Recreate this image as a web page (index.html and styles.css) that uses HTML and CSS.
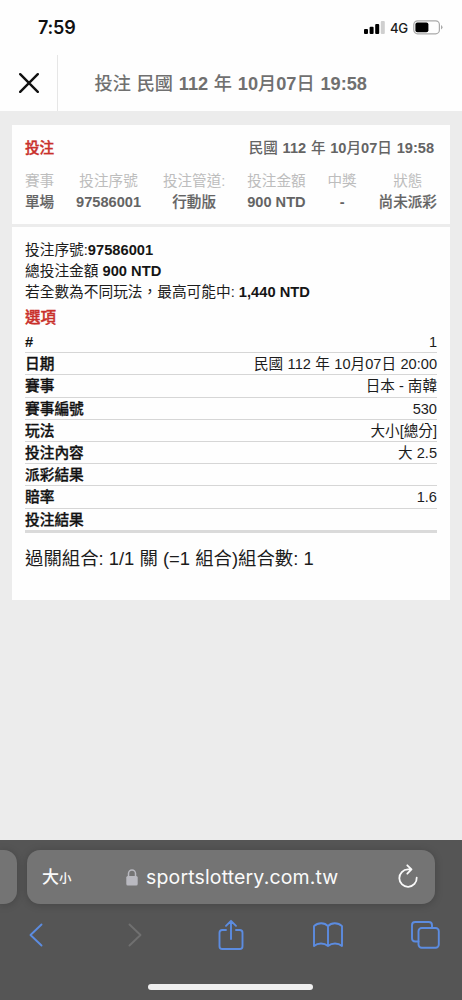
FILE: index.html
```html
<!DOCTYPE html>
<html lang="zh-Hant">
<head>
<meta charset="utf-8">
<meta name="viewport" content="width=device-width, initial-scale=1">
<title>投注</title>
<link rel="stylesheet" href="styles.css">
</head>
<body>
<div class="phone">
  <div class="status">
    <span class="clock">7:59</span>
    <div class="status-right">
      <svg class="signal" width="21" height="13" viewBox="0 0 21 13"><rect x="0" y="8" width="4" height="5" rx="1"/><rect x="5.6" y="5.8" width="4" height="7.2" rx="1"/><rect x="11.2" y="3" width="4" height="10" rx="1"/><rect x="16.8" y="0" width="4" height="13" rx="1" fill="#cfcfcf"/></svg>
      <span class="net">4G</span>
      <svg class="battery" width="30" height="15" viewBox="0 0 30 15"><rect x=".8" y=".8" width="25.6" height="13" rx="3.8" fill="none" stroke="#a9a9a9" stroke-width="1.2"/><rect x="2.4" y="2.4" width="13" height="9.8" rx="2"/><path d="M28 5v4.600q1.500-.8 1.500-2.300T28 5z" fill="#a9a9a9"/></svg>
    </div>
  </div>
  <header class="nav">
    <div class="close"><svg width="20" height="20" viewBox="0 0 20 20"><path d="M1.200 1.200l17.600 17.600M18.800 1.200L1.200 18.800"/></svg></div>
    <h1 class="title">投注 民國 <b>112</b> 年 <b>10</b>月<b>07</b>日 <b>19:58</b></h1>
  </header>
  <main class="content">
    <section class="card">
      <div class="summary">
        <div class="summary-head"><span class="red">投注</span><span class="when">民國 <b>112</b> 年 <b>10</b>月<b>07</b>日 <b>19:58</b></span></div>
        <div class="cols">
          <div><span>賽事</span><strong>單場</strong></div>
          <div><span>投注序號</span><strong class="latin">97586001</strong></div>
          <div><span>投注管道:</span><strong>行動版</strong></div>
          <div><span>投注金額</span><strong class="latin">900 NTD</strong></div>
          <div><span>中獎</span><strong class="latin">-</strong></div>
          <div><span>狀態</span><strong>尚未派彩</strong></div>
        </div>
      </div>
      <div class="detail">
        <p>投注序號:<b>97586001</b></p>
        <p>總投注金額 <b>900 NTD</b></p>
        <p>若全數為不同玩法，最高可能中: <b>1,440 NTD</b></p>
        <h2 class="red">選項</h2>
        <dl>
          <div><dt class="latin">#</dt><dd>1</dd></div>
          <div><dt>日期</dt><dd class="date">民國 112 年 10月07日 20:00</dd></div>
          <div><dt>賽事</dt><dd>日本 - 南韓</dd></div>
          <div><dt>賽事編號</dt><dd>530</dd></div>
          <div><dt>玩法</dt><dd>大小[總分]</dd></div>
          <div><dt>投注內容</dt><dd>大 2.5</dd></div>
          <div><dt>派彩結果</dt><dd></dd></div>
          <div><dt>賠率</dt><dd>1.6</dd></div>
          <div><dt>投注結果</dt><dd></dd></div>
        </dl>
        <p class="combo">過關組合: 1/1 關 (=1 組合)組合數: 1</p>
      </div>
    </section>
  </main>
  <footer class="browser">
    <div class="tabs">
      <div class="prev-tab"></div>
      <div class="address">
        <span class="size">大<small>小</small></span>
        <span class="host"><svg width="12" height="17" viewBox="0 0 12 17"><path d="M2.500 8V4.500a3.500 3.500 0 0 1 7 0V8" fill="none" stroke="#b9b9c0" stroke-width="1.500"/><rect x=".3" y="7" width="11.400" height="9.500" rx="1.600" fill="#b9b9c0"/></svg>sportslottery.com.tw</span>
        <svg class="reload" width="20" height="24" viewBox="0 0 20 24"><path d="M13.300 5.400H10A8.700 8.700 0 1 0 18.700 13.600M9.300 1.300l4.200 4.100-4.200 4.300"/></svg>
      </div>
    </div>
    <div class="tools">
      <svg width="14" height="24" viewBox="0 0 14 24"><path d="M12.500 1.500L1.500 12l11 10.500"/></svg>
      <svg class="off" width="14" height="24" viewBox="0 0 14 24"><path d="M1.500 1.500L12.500 12l-11 10.500"/></svg>
      <svg width="26" height="32" viewBox="0 0 26 32"><path d="M8 11H4.300Q1.500 11 1.500 13.800V27.200Q1.500 30 4.300 30H21.700Q24.500 30 24.500 27.200V13.800Q24.500 11 21.700 11H18M13 20V2M8 6.800l5-5 5 5"/></svg>
      <svg width="30" height="26" viewBox="0 0 30 26"><path d="M15 4.200Q12.500 1.200 8.200 1.200T1 4.200V24Q4 21.500 8 21.500T15 24Q18 21.500 22 21.500T29 24V4.200Q26 1.200 21.800 1.200T15 4.200V24"/></svg>
      <svg width="29" height="28" viewBox="0 0 29 28"><path d="M7.500 20.500H4.200Q1 20.500 1 17.300V4.200Q1 1 4.200 1H17.800Q21 1 21 4.200V7"/><rect x="7.500" y="7" width="20.300" height="19.800" rx="3.200"/></svg>
    </div>
    <div class="home"></div>
  </footer>
</div>
</body>
</html>
```
FILE: styles.css
```css
* { box-sizing: border-box; margin: 0; padding: 0; }
body { background: #ececec; }
.phone { width: 462px; height: 1000px; display: flex; flex-direction: column; overflow: hidden; font-family: "Liberation Sans", "Noto Sans CJK TC", sans-serif; color: #1c1c1c; }
svg { display: block; flex: none; }
.status { height: 55px; background: #fefefe; display: flex; justify-content: space-between; padding: 0 19px 0 38px; }
.clock { font: 600 18px/56px Inter, sans-serif; letter-spacing: -.2px; color: #111; }
.status-right { display: flex; align-items: center; height: 55px; }
.net { font: 500 13.2px/20px Inter, sans-serif; letter-spacing: -.2px; margin: 0 5px 0 5px; }
.nav { height: 56px; background: #fefefe; display: flex; }
.close { width: 58px; border-right: 1px solid #e6e6e6; display: flex; align-items: center; padding-left: 19px; }
.close path { stroke: #111; stroke-width: 2.4; stroke-linecap: round; }
.title { font-size: 18.2px; line-height: 58px; font-weight: 500; color: #707070; padding-left: 36.5px; white-space: nowrap; word-spacing: .7px; }
.content { height: 729px; background: #ececec; padding: 14px 12px 0; }
.card { height: 475px; background: #fefefe; font-size: 14.6px; }
.summary { height: 102px; border-bottom: 3px solid #ececec; padding: 12px 13px 0; }
.summary-head { display: flex; justify-content: space-between; line-height: 22px; color: #646464; padding-right: 3px; }
.when { font-weight: 500; word-spacing: .7px; }
.red { color: #c9302b; font-weight: 500; -webkit-text-stroke: .35px #c9302b; }
.cols { display: flex; justify-content: space-between; margin-top: 12px; text-align: center; color: #bdbdbd; }
.cols span, .cols strong { display: block; line-height: 21px; white-space: nowrap; }
.cols strong { color: #646464; font-weight: 500; -webkit-text-stroke: .2px #646464; }
.cols .latin, dl .latin { font-weight: 700; -webkit-text-stroke: 0; }
.detail { padding: 13px 13px 0; font-size: 14.7px; }
.detail p { line-height: 21px; height: 21px; white-space: nowrap; }
.detail b { color: #151515; }
.detail h2 { font-size: 15.5px; line-height: 29px; height: 28px; }
dl div { display: flex; justify-content: space-between; height: 22.2px; line-height: 23px; border-bottom: 1px solid #d6d6d6; }
dl div:last-child { height: 24px; border-bottom: 3px solid #dadada; }
dt { font-weight: 500; color: #111; -webkit-text-stroke: .3px #111; }
dd { font-size: 14.6px; }
.date { word-spacing: .4px; }
.detail .combo { font-size: 18.4px; line-height: 28px; height: 28px; margin-top: 12px; }
.browser { height: 160px; background: #555; padding-top: 10px; }
.tabs { display: flex; gap: 10px; }
.prev-tab { width: 17px; height: 54px; background: #747474; border-radius: 0 13px 13px 0; box-shadow: 0 1px 8px #0003; }
.address { width: 408px; height: 54px; background: #747474; border-radius: 13px; box-shadow: 0 1px 8px #0003; display: flex; align-items: center; justify-content: space-between; padding: 0 17px 0 15px; color: #fafafa; }
.size { font: 500 17px/54px "Noto Sans CJK TC", sans-serif; width: 84px; }
.size small { font-size: 12.5px; }
.host { display: flex; align-items: center; gap: 8px; font: 400 19.5px/55px Inter, sans-serif; letter-spacing: .15px; flex: 1; }
.reload { margin-bottom: 2px; }
.reload path { fill: none; stroke: #fafafa; stroke-width: 1.8; stroke-linecap: round; stroke-linejoin: round; }
.tools { height: 62px; display: grid; grid-template-columns: repeat(5, 97.5px); margin-left: -13px; justify-items: center; align-items: center; }
.tools path, .tools rect { fill: none; stroke: #5c8ce0; stroke-width: 1.9; stroke-linecap: round; stroke-linejoin: round; }
.tools .off path { stroke: #707070; }
.tools .off { margin-left: 4px; }
.home { width: 165px; height: 6px; border-radius: 3px; background: #efefef; margin: 18px auto 0 148px; }
```
